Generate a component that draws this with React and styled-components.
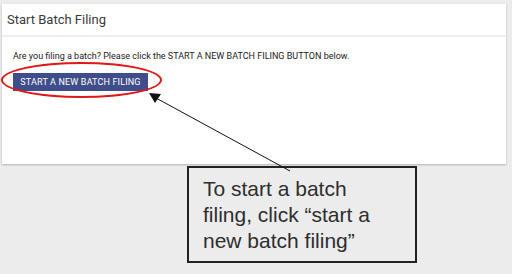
import styled, { createGlobalStyle } from 'styled-components';

const GlobalStyle = createGlobalStyle`
  html, body { margin: 0; padding: 0; background: #ececec; }
  body { font-family: Roboto, "Liberation Sans", sans-serif; }
`;

const Page = styled.div`
  position: relative;
  width: 512px;
  height: 274px;
  padding-top: 4px;
  box-sizing: border-box;
  overflow: hidden;
`;

const Card = styled.div`
  margin: 0 6px 0 2px;
  height: 160px;
  background: #fff;
  box-shadow: 0 1px 2px rgba(0, 0, 0, 0.25);
  display: flex;
  flex-direction: column;
`;

const CardHeader = styled.div`
  height: 31px;
  padding: 0 5px;
  display: flex;
  align-items: center;
  border-bottom: 2px solid #efefef;
  font-size: 13px;
  color: #3a3a3a;
`;

const CardBody = styled.div`
  padding: 14px 11px;
  display: flex;
  flex-direction: column;
  align-items: flex-start;
  gap: 9px;
`;

const Intro = styled.p`
  margin: 0;
  font-size: 9px;
  color: #222;
`;

const ButtonWrap = styled.div`
  position: relative;
`;

const PrimaryButton = styled.button`
  width: 135px;
  height: 18px;
  border: none;
  padding: 0;
  background: #3f4e8a;
  color: #fff;
  font-family: Roboto, sans-serif;
  font-size: 9px;
  font-weight: 400;
  letter-spacing: 0.15px;
  cursor: pointer;
`;

const Highlight = styled.div`
  position: absolute;
  left: -12px;
  top: -8px;
  width: 157px;
  height: 32px;
  border: 2px solid #e01818;
  border-radius: 50%;
  pointer-events: none;
`;

const Callout = styled.div`
  margin: 2px 0 0 187px;
  width: 230px;
  height: 97px;
  box-sizing: border-box;
  border: 2px solid #222;
  padding: 8px 30px 0 14px;
  font-family: "Liberation Sans", Arial, sans-serif;
  font-size: 21px;
  line-height: 26px;
  color: #2e2e2e;
`;

const Arrow = styled.svg`
  position: absolute;
  left: 0;
  top: 0;
  pointer-events: none;
`;

export default function App() {
  return (
    <Page>
      <GlobalStyle />
      <Card>
        <CardHeader>Start Batch Filing</CardHeader>
        <CardBody>
          <Intro>Are you filing a batch? Please click the START A NEW BATCH FILING BUTTON below.</Intro>
          <ButtonWrap>
            <PrimaryButton>START A NEW BATCH FILING</PrimaryButton>
            <Highlight />
          </ButtonWrap>
        </CardBody>
      </Card>
      <Callout>
        To start a batch filing, click “start a new batch filing”
      </Callout>
      <Arrow width="512" height="274" viewBox="0 0 512 274">
        <line x1="290" y1="171" x2="156" y2="98" stroke="#111" strokeWidth="1" />
        <polygon points="149,93 161,94 155,103" fill="#111" />
      </Arrow>
    </Page>
  );
}
